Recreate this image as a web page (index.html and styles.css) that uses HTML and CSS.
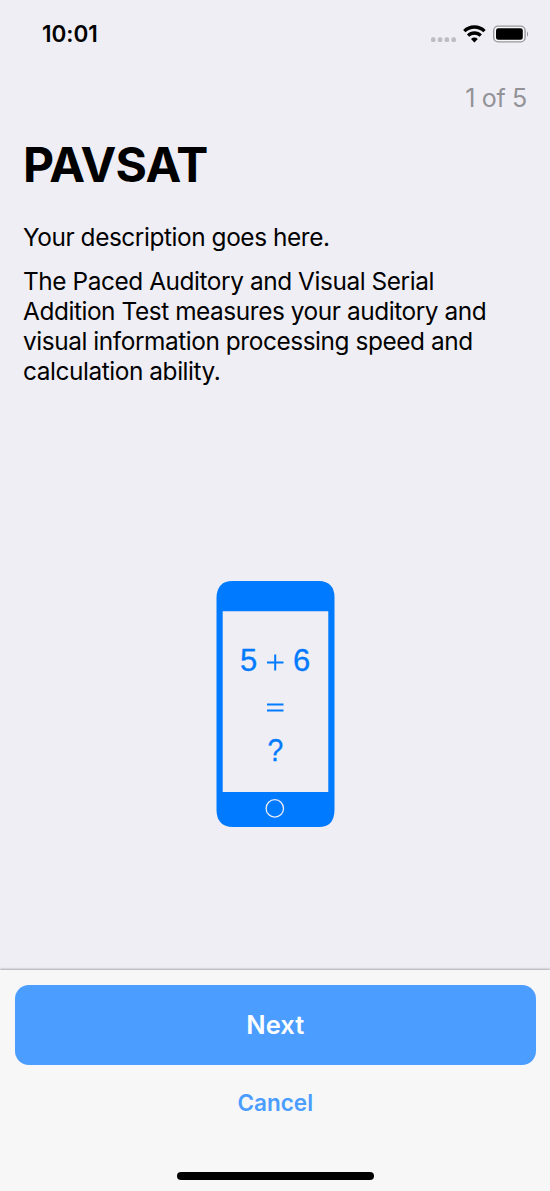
FILE: index.html
```html
<!DOCTYPE html>
<html lang="en">
<head>
<meta charset="utf-8">
<title>PAVSAT</title>
<link rel="stylesheet" href="styles.css">
</head>
<body>
<div class="screen">
  <header class="status">
    <span class="time">10:01</span>
    <svg class="indicators" width="98" height="18" viewBox="430 25 98 18">
      <g fill="#bebdc3"><rect x="431" y="37.3" width="4.5" height="4.7" rx="1.6"/><rect x="437.8" y="37.3" width="4.5" height="4.7" rx="1.6"/><rect x="444.6" y="37.3" width="4.5" height="4.7" rx="1.6"/><rect x="451.4" y="37.3" width="4.5" height="4.7" rx="1.6"/></g>
      <g fill="none" stroke="#000" stroke-width="3.3"><path d="M464.3 31.2A14.3 14.3 0 0 1 484.5 31.2"/><path d="M468.1 35.6A8.9 8.9 0 0 1 480.7 35.6"/></g>
      <path d="M474.4 42.4L471 39Q474.4 36.2 477.8 39Z"/>
      <rect x="493.7" y="26.1" width="31.4" height="15.8" rx="4.4" fill="#f7f7fa" stroke="#98979c" stroke-width="1.4"/>
      <rect x="496" y="28.3" width="26.8" height="11.4" rx="2.3"/>
      <path d="M527 31.5Q528.5 32.5 528.5 34T527 36.5Z" fill="#98979c"/>
    </svg>
  </header>
  <div class="progress">1 of 5</div>
  <main>
    <h1>PAVSAT</h1>
    <p class="summary">Your description goes here.</p>
    <p class="detail">The Paced Auditory and Visual Serial<br>Addition Test measures your auditory and<br>visual information processing speed and<br>calculation ability.</p>
    <svg class="phone" width="120" height="248" viewBox="216 580 120 248">
      <path fill="#007aff" fill-rule="evenodd" d="M232.5 581H319Q334.5 581.5 334.5 597.5V810.5Q334 827 319 827H232.5Q217 826.5 216.5 810.5V597.5Q217 581 232.5 581ZM222.7 611.3V792H328.3V611.3Z"/>
      <circle cx="274.8" cy="808.4" r="8.7" fill="none" stroke="#efeef4" stroke-width="1.3"/>
      <g class="sum"><text x="248.5" y="670.5">5</text><text x="301.7" y="670.5">6</text><text x="275.3" y="760.5" textLength="15.8" lengthAdjust="spacingAndGlyphs">?</text></g>
      <path d="M267 662.5H283.5M275.2 654.5V670.5M267 704.5H283.5M267 710.5H283.5" fill="none" stroke="#007aff" stroke-width="2"/>
    </svg>
  </main>
  <footer>
    <button class="next">Next</button>
    <button class="cancel">Cancel</button>
    <div class="home"></div>
  </footer>
</div>
</body>
</html>
```
FILE: styles.css
```css
* { box-sizing: border-box; }
body { margin: 0; background: #efeef4; color: #000; font-family: Inter, "Liberation Sans", sans-serif; }
.screen { width: 550px; height: 1191px; display: flex; flex-direction: column; overflow: hidden; }
.status { height: 68px; padding: 0 22px 0 42px; display: flex; align-items: center; justify-content: space-between; }
.time { padding-bottom: 2px; font-size: 22.5px; font-weight: 600; letter-spacing: -.05px; }
.indicators { display: block; }
.progress { height: 60px; padding-right: 23px; line-height: 60px; text-align: right; font-size: 25px; color: #939297; letter-spacing: -.3px; }
main { flex: 1; padding: 7px 21px 0 23px; display: flex; flex-direction: column; }
h1 { margin: 0; height: 60px; line-height: 60px; font-size: 48px; font-weight: 700; letter-spacing: -.8px; }
p { margin: 0; font-size: 24.4px; line-height: 29.7px; white-space: nowrap; letter-spacing: -.43px; }
.summary { margin-top: 28px; }
.detail { margin-top: 14.7px; }
.phone { display: block; margin: 193.3px auto 0; }
.sum { font-family: "Liberation Sans", Arial, sans-serif; font-size: 31px; fill: #007aff; stroke: #007aff; stroke-width: .3px; text-anchor: middle; }
footer { height: 221.5px; background: #f7f7f7; box-shadow: 0 -1px 2px #a9a8ad; padding: 15px 14.5px 0 15px; display: flex; flex-direction: column; align-items: center; }
button { border: 0; padding: 0; font-family: inherit; font-weight: 600; }
.next { width: 100%; height: 80.5px; padding-bottom: 1px; border-radius: 14px; background: #4b9dff; color: #fff; font-size: 25.5px; }
.cancel { margin-top: 18px; height: 40px; padding-bottom: 1px; background: none; color: #4b9dff; font-size: 22.5px; }
.home { width: 197px; height: 8px; border-radius: 4px; margin-top: 49px; background: #000; }
```
